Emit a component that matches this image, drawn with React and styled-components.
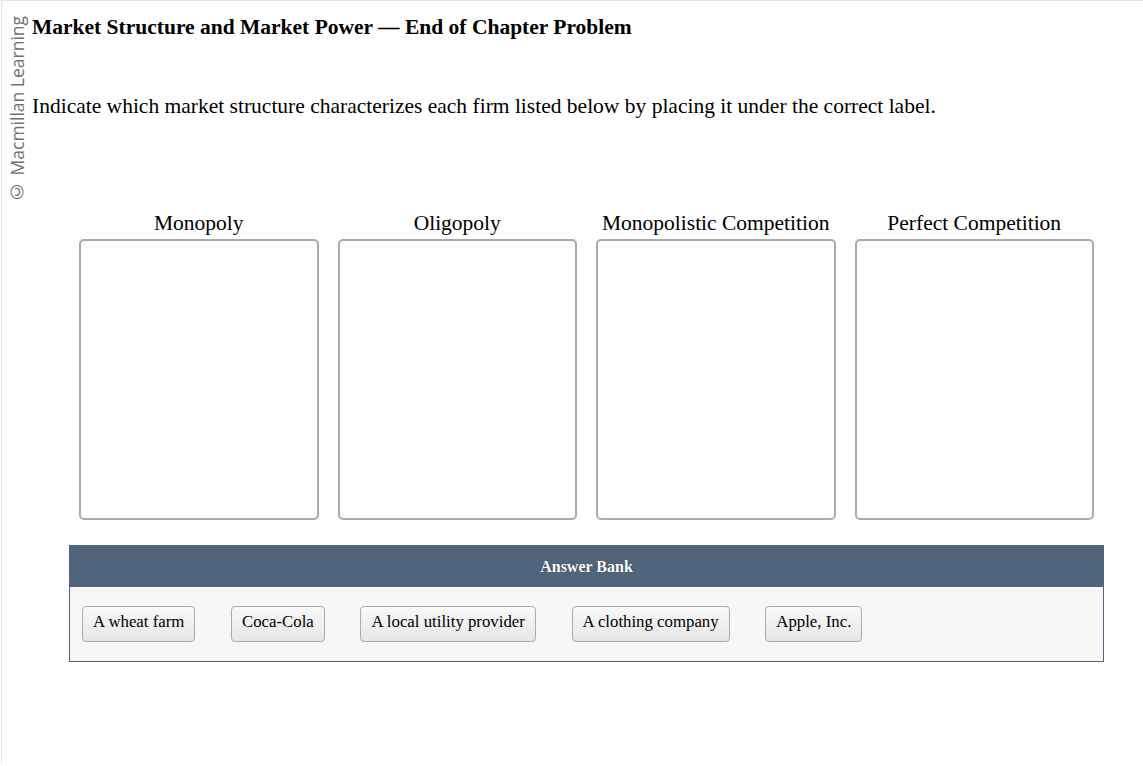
import React from "react";
import styled, { createGlobalStyle } from "styled-components";

const Global = createGlobalStyle`
  html, body { margin: 0; padding: 0; background: #fff; }
  body { font-family: "Liberation Serif", "Times New Roman", serif; color: #000; }
`;

const Frame = styled.div`
  margin-left: 1px;
  height: 765px;
  border-top: 1px solid #e6e6e6;
  border-left: 1px solid #e6e6e6;
  display: flex;
  box-sizing: border-box;
`;

const Side = styled.div`
  width: 30px;
  flex: none;
  display: flex;
  justify-content: center;
  padding-top: 15px;
  box-sizing: border-box;
`;

const Credit = styled.div`
  writing-mode: vertical-rl;
  transform: rotate(180deg);
  font-family: "Open Sans", "Liberation Sans", sans-serif;
  font-size: 17.5px;
  color: #707070;
  height: 188px;
  line-height: 18px;
  white-space: nowrap;
`;

const Main = styled.div`
  flex: 1;
  display: flex;
  flex-direction: column;
  padding-right: 2px;
`;

const Title = styled.h1`
  margin: 13px 0 0;
  font-size: 21.5px;
  line-height: 26px;
  font-weight: bold;
`;

const Prompt = styled.p`
  margin: 53px 0 0;
  font-size: 21.5px;
  line-height: 26px;
`;

const Columns = styled.div`
  margin: 91px 47px 0;
  display: grid;
  grid-template-columns: repeat(4, 1fr);
  column-gap: 19px;
`;

const Column = styled.div`
  display: flex;
  flex-direction: column;
`;

const Label = styled.div`
  text-align: center;
  font-size: 21.5px;
  line-height: 26px;
  margin-bottom: 3px;
`;

const Drop = styled.div`
  height: 281px;
  border: 2px solid #aaa;
  border-radius: 5px;
  box-sizing: border-box;
`;

const Bank = styled.div`
  margin: 25px 37px 0;
  border: 1px solid #50647b;
  background: #f7f7f7;
`;

const BankHead = styled.div`
  height: 41px;
  background: #50647b;
  color: #fff;
  display: flex;
  align-items: center;
  justify-content: center;
  font-size: 16px;
  font-weight: bold;
  text-shadow: 0 0 1px #223;
`;

const Chips = styled.div`
  display: flex;
  gap: 35.7px;
  padding: 19px 12px 19px;
`;

const Chip = styled.div`
  height: 36px;
  box-sizing: border-box;
  padding: 0 10px 4px;
  display: flex;
  align-items: center;
  border: 1px solid #aaa;
  border-radius: 4px;
  background: linear-gradient(#f9f9f9, #e6e6e6);
  font-size: 16.8px;
  white-space: nowrap;
`;

const labels = ["Monopoly", "Oligopoly", "Monopolistic Competition", "Perfect Competition"];
const items = ["A wheat farm", "Coca-Cola", "A local utility provider", "A clothing company", "Apple, Inc."];

export default function App() {
  return (
    <>
      <Global />
      <Frame>
        <Side>
          <Credit>© Macmillan Learning</Credit>
        </Side>
        <Main>
          <Title>Market Structure and Market Power — End of Chapter Problem</Title>
          <Prompt>
            Indicate which market structure characterizes each firm listed below by placing it under the correct label.
          </Prompt>
          <Columns>
            {labels.map((l) => (
              <Column key={l}>
                <Label>{l}</Label>
                <Drop />
              </Column>
            ))}
          </Columns>
          <Bank>
            <BankHead>Answer Bank</BankHead>
            <Chips>
              {items.map((i) => (
                <Chip key={i}>{i}</Chip>
              ))}
            </Chips>
          </Bank>
        </Main>
      </Frame>
    </>
  );
}
